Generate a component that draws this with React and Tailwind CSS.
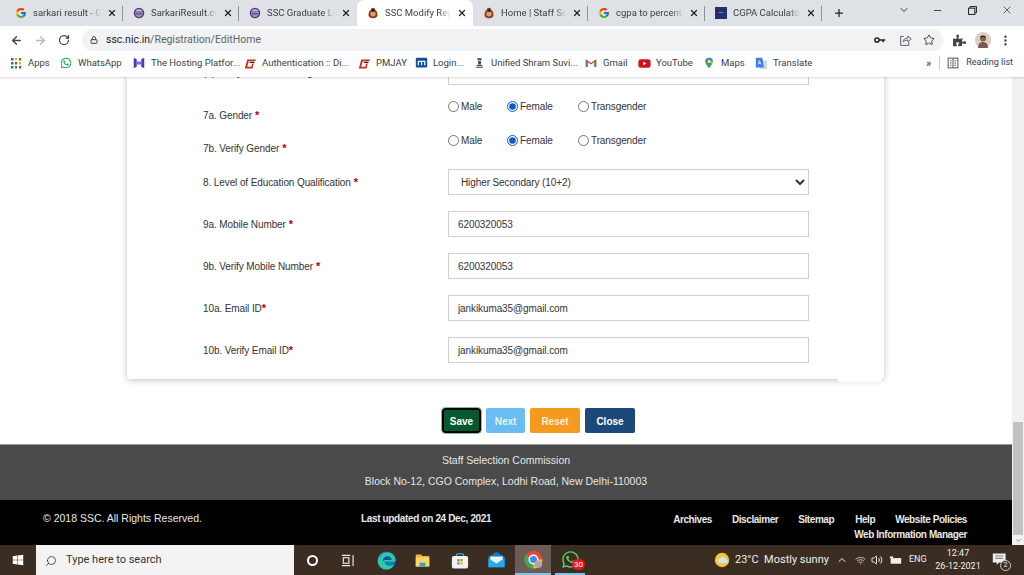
import React from "react";
import { ArrowLeft, ArrowRight, RotateCw, Lock, Star, MoreVertical, X, Plus, ChevronDown, ChevronUp, Minus, Search, Volume2, Wifi } from "lucide-react";
import { FcGoogle } from "react-icons/fc";
import { FaWhatsapp, FaPuzzlePiece, FaYoutube, FaWindows } from "react-icons/fa";

function EmblemIcon() {
  return (
    <svg viewBox="0 0 16 16" className="w-[12px] h-[12px]">
      <path d="M8 1c2 0 3 1.500 3 3 2 1 3 4 3 7 0 2-2 4-6 4s-6-2-6-4c0-3 1-6 3-7 0-1.500 1-3 3-3z" fill="#8a3a1c" />
      <circle cx="8" cy="9" r="3.500" fill="#d9a36a" />
      <circle cx="8" cy="4.500" r="2" fill="#3a2416" />
    </svg>
  );
}

function SarkariIcon() {
  return (
    <svg viewBox="0 0 16 16" className="w-[12px] h-[12px]">
      <circle cx="8" cy="8" r="7" fill="#4f3a7d" />
      <circle cx="8" cy="8" r="5" fill="#c9bfe0" />
      <path d="M3.500 6.500h9M3 8.500h10M4 10.500h8" stroke="#4f3a7d" strokeWidth="1.200" />
    </svg>
  );
}

function CalcIcon() {
  return (
    <svg viewBox="0 0 16 16" className="w-[12px] h-[12px]">
      <rect width="16" height="16" fill="#27306f" />
      <rect x="5" y="7" width="6" height="1" fill="#8f9ad0" />
    </svg>
  );
}

function AppsIcon() {
  const colors = ["#d93025", "#f9ab00", "#1e8e3e", "#1a73e8", "#d93025", "#f9ab00", "#1e8e3e", "#1a73e8", "#d93025"];
  return (
    <div className="grid grid-cols-3 gap-[1.500px] w-[10px] h-[10px]">
      {colors.map((c, i) => (
        <svg key={i} viewBox="0 0 2 2" className="w-[2.500px] h-[2.500px]">
          <rect width="2" height="2" fill={c} />
        </svg>
      ))}
    </div>
  );
}

function HostingIcon() {
  return (
    <svg viewBox="0 0 16 16" className="w-[12px] h-[12px]">
      <path d="M1 1l4 2v10l-4 2zM15 1l-4 2v10l4 2z" fill="#4b3bb5" />
      <path d="M5 6l6 0v4H5z" fill="#8d5fd8" />
    </svg>
  );
}

function SwooshIcon() {
  return (
    <svg viewBox="0 0 16 16" className="w-[13px] h-[13px]">
      <path d="M4 3h11l-1 2H6L4 12h5l1-4h2l-1.500 6H1z" fill="#c8321e" />
      <path d="M7 6.500h6" stroke="#1d1d1d" strokeWidth="1.600" />
    </svg>
  );
}

function MoodleIcon() {
  return (
    <svg viewBox="0 0 16 16" className="w-[13px] h-[13px]">
      <rect x="1" y="1" width="14" height="12" rx="1.500" fill="#0d4f9e" />
      <path d="M4 10V5.500h8V10M8 5.500V10" stroke="#fff" strokeWidth="1.500" fill="none" />
    </svg>
  );
}

function PillarIcon() {
  return (
    <svg viewBox="0 0 16 16" className="w-[11px] h-[12px]">
      <path d="M5 1h6v3H5zM6 5h4v5H6zM4 11h8v1.500H4zM3 13.500h10V15H3z" fill="#444" />
    </svg>
  );
}

function GmailIcon() {
  return (
    <svg viewBox="0 0 16 16" className="w-[12px] h-[12px]">
      <path d="M1 3v10h3V7l4 3 4-3v6h3V3l-7 5z" fill="#d93025" />
      <path d="M1 13h3V7L1 4.500z" fill="#4285f4" />
      <path d="M12 13h3V4.500L12 7z" fill="#34a853" />
    </svg>
  );
}

function MapsIcon() {
  return (
    <svg viewBox="0 0 16 16" className="w-[12px] h-[14px]">
      <path d="M8 1a5 5 0 0 0-5 5c0 3.500 5 9 5 9s5-5.500 5-9a5 5 0 0 0-5-5z" fill="#34a853" />
      <path d="M8 1a5 5 0 0 1 5 5L4 3z" fill="#4285f4" />
      <path d="M3 6a5 5 0 0 1 1-3l3 3z" fill="#ea4335" />
      <path d="M13 6c0 1-.500 2-1 3L8 6z" fill="#fbbc04" />
      <circle cx="8" cy="6" r="1.800" fill="#fff" />
    </svg>
  );
}

function TranslateIcon() {
  return (
    <svg viewBox="0 0 16 16" className="w-[13px] h-[13px]">
      <rect x="6" y="4" width="9" height="11" fill="#cfd8e6" />
      <path d="M1 1h8l2 12H1z" fill="#3f7fe0" />
      <path d="M4 9l1.500-4.500L7 9M4.500 7.800h2" stroke="#fff" fill="none" strokeWidth="0.900" />
    </svg>
  );
}

function ReadingIcon() {
  return (
    <svg viewBox="0 0 16 16" className="w-[12px] h-[12px]" fill="none" stroke="#444" strokeWidth="1.200">
      <rect x="1.500" y="1.500" width="13" height="13" />
      <path d="M8 1.500v13M4 5h2M4 8h2M4 11h2M10 5h2M10 8h2M10 11h2" />
    </svg>
  );
}

function KeyIcon() {
  return (
    <svg viewBox="0 0 16 10" className="w-[12px] h-[8px]" fill="none" stroke="#222" strokeWidth="2">
      <circle cx="4" cy="5" r="2.800" />
      <path d="M7 5h8M12 5v3" />
    </svg>
  );
}

function ShareIcon() {
  return (
    <svg viewBox="0 0 16 16" className="w-[13px] h-[13px]" fill="none" stroke="#5f6368" strokeWidth="1.200">
      <path d="M6 3H2v11h10v-4" />
      <path d="M5 10c0-3 2-5 6-5V2.500L15 6l-4 3.500V7.500C8 7.500 6 8.500 5 10z" />
    </svg>
  );
}

function RestoreIcon() {
  return (
    <svg viewBox="0 0 10 10" className="w-[9px] h-[9px]" fill="none" stroke="#222" strokeWidth="1.100">
      <rect x="0.600" y="2.400" width="7" height="7" />
      <path d="M2.400 2.400V.600h7v7H7.600" />
    </svg>
  );
}

function AvatarIcon() {
  return (
    <svg viewBox="0 0 16 16" className="w-[16px] h-[16px]">
      <circle cx="8" cy="8" r="8" fill="#d8cfc6" />
      <path d="M3 16c0-4 2-6 5-6s5 2 5 6z" fill="#7a5a52" />
      <circle cx="8" cy="6.500" r="3" fill="#8b5e3c" />
      <path d="M5 5.500C5 3 11 3 11 5.500 9 4.500 7 4.500 5 5.500z" fill="#1c1410" />
    </svg>
  );
}

function EdgeIcon() {
  return (
    <svg viewBox="0 0 20 20" className="w-[19px] h-[19px]">
      <circle cx="10" cy="10" r="9.500" fill="#0f7dc2" />
      <path d="M1 10C2 3 9 .500 14 2c4 1.500 6 5 5.500 9H8c0 4 5 6 10 3.500-2 4-6 5.500-9 5C4 19 .500 15 1 10z" fill="#30c9a8" />
      <path d="M6 12c-.500-4 2-6.500 5-6.500s4.500 2 4.500 4H8c-1 0-2 1-2 2.500z" fill="#0c5aa6" />
    </svg>
  );
}

function ExplorerIcon() {
  return (
    <svg viewBox="0 0 20 20" className="w-[17px] h-[15px]">
      <path d="M1 2h7l2 2h9v14H1z" fill="#e8b93c" />
      <rect x="1" y="6" width="18" height="12" fill="#f8d568" />
      <rect x="6" y="13" width="8" height="5" fill="#3a9fd5" />
    </svg>
  );
}

function StoreIcon() {
  return (
    <svg viewBox="0 0 20 20" className="w-[18px] h-[19px]">
      <path d="M6 6V3.500C6 2 14 2 14 3.500V6" stroke="#35a9e0" strokeWidth="1.500" fill="none" />
      <rect x="1" y="5" width="18" height="14" rx="2" fill="#f2f2f2" />
      <rect x="7" y="8.500" width="2.500" height="2.500" fill="#e8532b" />
      <rect x="10.500" y="8.500" width="2.500" height="2.500" fill="#7db33c" />
      <rect x="7" y="12" width="2.500" height="2.500" fill="#2f9be0" />
      <rect x="10.500" y="12" width="2.500" height="2.500" fill="#f5b82e" />
    </svg>
  );
}

function MailIcon() {
  return (
    <svg viewBox="0 0 20 20" className="w-[19px] h-[18px]">
      <path d="M1 6l9-5 9 5v12H1z" fill="#0f78c8" />
      <path d="M3 6h14v6l-7 4-7-4z" fill="#e9f5fc" />
      <path d="M1 8l9 6 9-6v10H1z" fill="#29a8ea" />
    </svg>
  );
}

function ChromeIcon() {
  return (
    <svg viewBox="0 0 20 20" className="w-[19px] h-[19px]">
      <circle cx="10" cy="10" r="9.500" fill="#e0483c" />
      <path d="M10 10L1.800 5A9.500 9.500 0 0 0 10 19.500z" fill="#3aa856" />
      <path d="M10 10h9.500A9.500 9.500 0 0 1 10 19.500z" fill="#f6c33b" />
      <circle cx="10" cy="10" r="4.500" fill="#4587ee" stroke="#fff" strokeWidth="1.500" />
      <circle cx="15" cy="15" r="4" fill="#b8a59b" />
    </svg>
  );
}

function WeatherIcon() {
  return (
    <svg viewBox="0 0 20 20" className="w-[16px] h-[16px]">
      <circle cx="10" cy="10" r="9" fill="#f7c52e" />
      <path d="M7 14a3 3 0 0 1 .500-6 4 4 0 0 1 7.500 1 2.500 2.500 0 0 1 0 5z" fill="#cfe3ee" />
    </svg>
  );
}

function BatteryIcon() {
  return (
    <svg viewBox="0 0 16 12" className="w-[13px] h-[11px]">
      <rect x="2" y="3" width="13" height="7" fill="#eee" />
      <path d="M1 1h4v2H1z" fill="#eee" />
    </svg>
  );
}

function NotifyIcon() {
  return (
    <svg viewBox="0 0 20 20" className="w-[16px] h-[16px]">
      <path d="M1 2h16v11h-8l-3 3v-3H1z" fill="#eee" />
      <path d="M4 5h10M4 8h10" stroke="#6a5a4c" strokeWidth="1" />
    </svg>
  );
}

const tabs = [
  { icon: <FcGoogle className="w-[12px] h-[12px]" />, title: "sarkari result - Go", width: "w-[118px]", sep: true },
  { icon: <SarkariIcon />, title: "SarkariResult.com", width: "w-[116px]", sep: true },
  { icon: <SarkariIcon />, title: "SSC Graduate Lev", width: "w-[118px]" },
  { icon: <EmblemIcon />, title: "SSC Modify Regis", width: "w-[116px]", active: true },
  { icon: <EmblemIcon />, title: "Home | Staff Sele", width: "w-[115px]", sep: true },
  { icon: <FcGoogle className="w-[12px] h-[12px]" />, title: "cgpa to percenta", width: "w-[117px]", sep: true },
  { icon: <CalcIcon />, title: "CGPA Calculator -", width: "w-[117px]", sep: true },
];

const bookmarks = [
  { icon: <AppsIcon />, label: "Apps", width: "w-[50px]" },
  { icon: <FaWhatsapp className="w-[12px] h-[12px] text-[#12a84e]" />, label: "WhatsApp", width: "w-[73px]" },
  { icon: <HostingIcon />, label: "The Hosting Platfor...", width: "w-[111px]" },
  { icon: <SwooshIcon />, label: "Authentication :: Di...", width: "w-[114px]" },
  { icon: <SwooshIcon />, label: "PMJAY", width: "w-[57px]" },
  { icon: <MoodleIcon />, label: "Login...", width: "w-[58px]" },
  { icon: <PillarIcon />, label: "Unified Shram Suvi...", width: "w-[112px]" },
  { icon: <GmailIcon />, label: "Gmail", width: "w-[53px]" },
  { icon: <FaYoutube className="w-[13px] h-[13px] text-[#d3101c]" />, label: "YouTube", width: "w-[65px]" },
  { icon: <MapsIcon />, label: "Maps", width: "w-[52px]" },
  { icon: <TranslateIcon />, label: "Translate", width: "w-[60px]" },
];

function Tab({ tab }) {
  return (
    <div className={`relative flex items-center h-full ${tab.width} pl-[9px] pr-[6px] gap-[6px] ${tab.active ? "bg-white rounded-t-[7px]" : ""}`}>
      <span className="flex w-[13px] justify-center shrink-0">{tab.icon}</span>
      <span className="flex-1 min-w-0 whitespace-nowrap text-[9.500px] text-[#3c4043] [mask-image:linear-gradient(90deg,#000_82%,transparent)]">{tab.title}</span>
      <X className="w-[10px] h-[10px] shrink-0 text-[#222]" strokeWidth={3} />
      {tab.sep && <span className="absolute right-0 top-[6px] h-[15px] w-px bg-[#8f9398]" />}
    </div>
  );
}

function Row({ label, children }) {
  return (
    <div className="flex items-center h-[26px] mb-[16px]">
      <label className="w-[245px] shrink-0 text-[10px] tracking-[-0.1px]">{label}</label>
      {children}
    </div>
  );
}

function Req({ tight }) {
  return <span className={`${tight ? "" : "ml-[3px]"} text-[#b00000] font-bold text-[11px]`}>*</span>;
}

function TextBox({ value }) {
  return <input readOnly value={value} className="w-[361px] h-[26px] px-[9px] bg-white border border-[#cfcfcf] text-[10px] tracking-[-0.1px] text-[#333] outline-none" />;
}

function GenderRow({ label, name, height, labelPad }) {
  return (
    <div className={`flex ${height}`}>
      <label className={`w-[245px] shrink-0 ${labelPad} text-[10px] tracking-[-0.1px]`}>{label}<Req /></label>
      <div className="flex items-start pt-[2px] text-[10px] tracking-[-0.1px]">
        <label className="flex items-center gap-[2px] w-[59px] h-[14px]">
          <input type="radio" name={name} className="w-[11px] h-[11px] m-0" />
          Male
        </label>
        <label className="flex items-center gap-[2px] w-[71px] h-[14px]">
          <input type="radio" name={name} defaultChecked className="w-[11px] h-[11px] m-0 accent-[#0b5cc4]" />
          Female
        </label>
        <label className="flex items-center gap-[2px] h-[14px]">
          <input type="radio" name={name} className="w-[11px] h-[11px] m-0" />
          Transgender
        </label>
      </div>
    </div>
  );
}

export default function App() {
  return (
    <div className="w-[1024px] h-[575px] flex flex-col overflow-hidden bg-white font-['Liberation_Sans',sans-serif]">
      {/* browser chrome */}
      <div className="h-[77px] shrink-0 font-['Roboto',sans-serif] z-10 shadow-[0_1px_2px_rgba(0,0,0,0.15)] bg-white">
        <div className="h-[26px] bg-[#dee1e6] flex items-end pl-[5px]">
          {tabs.map((t) => <Tab key={t.title} tab={t} />)}
          <div className="w-[34px] h-full flex items-center justify-center">
            <Plus className="w-[12px] h-[12px] text-[#222]" strokeWidth={2.500} />
          </div>
          <div className="flex items-center h-full ml-auto text-[#333]">
            <ChevronDown className="w-[12px] h-[12px] mr-[22px] mb-[6px]" />
            <Minus className="w-[11px] h-[11px] mr-[25px] mb-[6px]" />
            <span className="mr-[24px] mb-[6px]"><RestoreIcon /></span>
            <X className="w-[12px] h-[12px] mr-[11px] mb-[6px]" strokeWidth={1.500} />
          </div>
        </div>
        <div className="h-[26px] pt-[2px] flex items-center pl-[10px] pr-[12px] bg-white">
          <ArrowLeft className="w-[13px] h-[13px] text-[#444]" strokeWidth={2.500} />
          <ArrowRight className="w-[13px] h-[13px] ml-[11px] text-[#b6b8bb]" strokeWidth={2.500} />
          <RotateCw className="w-[12px] h-[12px] ml-[11px] text-[#444]" strokeWidth={2.500} />
          <div className="ml-[12px] flex items-center w-[861px] h-[22px] rounded-full bg-[#f0f2f4] pl-[8px] pr-[8px]">
            <Lock className="w-[8px] h-[8px] text-[#444] mr-[8px]" strokeWidth={3} />
            <span className="text-[10.500px] text-[#202124]">ssc.nic.in<span className="text-[#5f6368]">/Registration/EditHome</span></span>
            <span className="ml-auto"><KeyIcon /></span>
            <span className="ml-[13px]"><ShareIcon /></span>
            <Star className="ml-[11px] w-[12px] h-[12px] text-[#444]" strokeWidth={2} />
          </div>
          <FaPuzzlePiece className="ml-[10px] w-[13px] h-[13px] text-[#444]" />
          <span className="ml-[9px]"><AvatarIcon /></span>
          <MoreVertical className="ml-[8px] w-[13px] h-[13px] text-[#444]" strokeWidth={2.500} />
        </div>
        <div className="h-[25px] pb-[3px] flex items-center pl-[9px] pr-[11px] text-[9.500px] text-[#3c4043]">
          {bookmarks.map((b) => (
            <div key={b.label} className={`flex items-center gap-[5px] ${b.width} whitespace-nowrap`}>
              <span className="flex w-[14px] justify-center shrink-0">{b.icon}</span>
              {b.label}
            </div>
          ))}
          <span className="ml-auto text-[10px] font-bold text-[#444]">»</span>
          <span className="ml-[8px] w-px h-[14px] bg-[#c9cbce]" />
          <span className="ml-[7px] mr-[7px]"><ReadingIcon /></span>
          <span className="text-[9px]">Reading list</span>
        </div>
      </div>

      <div className="flex-1 flex min-h-0">
        {/* page */}
        <div className="flex-1 min-w-0 flex flex-col overflow-hidden text-[#333]">
          <div className="relative ml-[127px] w-[757px] -mt-[18px] pl-[76px] pb-[0.010px] bg-white rounded-b-[3px] shadow-[0_1px_6px_rgba(0,0,0,0.25)]">
            <Row label="(b) Verify Year of Passing"><TextBox value="" /></Row>
            <div className="-mt-[4px]" />
            <GenderRow label="7a. Gender" name="g1" height="h-[34px]" labelPad="pt-[10px]" />
            <GenderRow label="7b. Verify Gender" name="g2" height="h-[38px]" labelPad="pt-[9px]" />
            <Row label={<>8. Level of Education Qualification<Req /></>}>
              <select defaultValue="hs" className="w-[361px] h-[26px] pl-[8px] bg-white border border-[#cfcfcf] text-[10px] tracking-[-0.1px] text-[#333] outline-none">
                <option value="hs">Higher Secondary (10+2)</option>
              </select>
            </Row>
            <Row label={<>9a. Mobile Number<Req /></>}><TextBox value="6200320053" /></Row>
            <Row label={<>9b. Verify Mobile Number<Req /></>}><TextBox value="6200320053" /></Row>
            <Row label={<>10a. Email ID<Req tight /></>}><TextBox value="jankikuma35@gmail.com" /></Row>
            <Row label={<>10b. Verify Email ID<Req tight /></>}><TextBox value="jankikuma35@gmail.com" /></Row>
            <span className="absolute right-[3px] -bottom-[3px] w-[43px] h-[3px] bg-white" />
          </div>

          <div className="flex gap-[5px] pl-[442px] mt-[29px] text-[10px] font-bold">
            <button className="w-[39px] h-[25px] pt-[1px] rounded-[3px] bg-[#06582f] text-white border-2 border-black outline outline-1 outline-[#8fb5a3]">Save</button>
            <button className="w-[39px] h-[25px] pt-[1px] rounded-[2px] bg-[#69bdf0] text-[#e6f4fc]">Next</button>
            <button className="w-[50px] h-[25px] pt-[1px] rounded-[2px] bg-[#f59a1e] text-[#fdeedb]">Reset</button>
            <button className="w-[50px] h-[25px] pt-[1px] rounded-[2px] bg-[#1c4a78] text-white">Close</button>
          </div>

          <div className="mt-auto">
            <div className="h-[56px] bg-[#4a4a4a] border-t border-[#999] flex flex-col items-center pt-[8px] gap-[5px] text-[10.500px] text-[#e6e6e6]">
              <p>Staff Selection Commission</p>
              <p>Block No-12, CGO Complex, Lodhi Road, New Delhi-110003</p>
            </div>
            <div className="h-[45px] bg-black text-[#e8e8e8] flex pl-[43px] pr-[45px] pt-[11px] text-[10px] tracking-[-0.35px] font-bold">
              <p className="w-[318px] font-normal tracking-normal text-[10.500px]">© 2018 SSC. All Rights Reserved.</p>
              <p>Last updated on 24 Dec, 2021</p>
              <div className="ml-auto flex flex-col items-end pt-[1px] tracking-[-0.43px]">
                <div className="flex">
                  <span className="mr-[20px]">Archives</span>
                  <span className="mr-[20px]">Disclaimer</span>
                  <span className="mr-[21px]">Sitemap</span>
                  <span className="mr-[20px]">Help</span>
                  <span>Website Policies</span>
                </div>
                <span>Web Information Manager</span>
              </div>
            </div>
          </div>
        </div>

        {/* scrollbar */}
        <div className="w-[12px] shrink-0 bg-[#f1f1f1] flex flex-col items-center">
          <div className="mt-auto w-[10px] h-[113px] bg-[#c1c1c1]" />
          <div className="h-[10px] flex items-center">
            <ChevronDown className="w-[7px] h-[7px] text-[#888]" strokeWidth={3} />
          </div>
        </div>
      </div>

      {/* windows taskbar */}
      <div className="h-[30px] shrink-0 bg-[#3b2d21] flex items-center whitespace-nowrap font-['Roboto',sans-serif] text-[#f0f0f0]">
        <div className="w-[36px] shrink-0 flex justify-center"><FaWindows className="w-[12px] h-[12px] text-white" /></div>
        <div className="w-[258px] shrink-0 h-full flex items-center pl-[9px] pt-[1px] bg-[#f3f3f3] text-[#333] text-[11px]">
          <Search className="w-[12px] h-[12px] mr-[9px] -scale-x-100 text-[#222]" strokeWidth={1.500} />
          Type here to search
        </div>
        <div className="w-[36px] shrink-0 flex justify-center"><span className="w-[11px] h-[11px] rounded-full border-2 border-white" /></div>
        <div className="w-[35px] shrink-0 flex justify-center">
          <svg viewBox="0 0 14 14" className="w-[13px] h-[13px]" fill="none" stroke="#eee" strokeWidth="1.200">
            <path d="M1 1.500h9M1 12.500h9M13 1v12" />
            <rect x="2.500" y="4" width="6" height="6" />
          </svg>
        </div>
        <div className="w-[39px] shrink-0 flex justify-center pl-[4px]"><EdgeIcon /></div>
        <div className="w-[37px] shrink-0 flex justify-center"><ExplorerIcon /></div>
        <div className="w-[37px] shrink-0 flex justify-center"><StoreIcon /></div>
        <div className="w-[37px] shrink-0 flex justify-center"><MailIcon /></div>
        <div className="w-[36px] shrink-0 h-full flex items-center justify-center bg-[#6b5d54] border-b-2 border-[#7cc4ee]"><ChromeIcon /></div>
        <div className="relative w-[30px] shrink-0 h-full flex items-center justify-center ml-[4px] border-b-2 border-[#7cc4ee]">
          <FaWhatsapp className="w-[19px] h-[19px] text-[#4cd964]" />
          <span className="absolute right-0 bottom-[3px] w-[13px] h-[11px] rounded-full bg-[#e0161e] text-[8px] leading-[11px] text-center text-white">30</span>
        </div>
        <div className="ml-[129px] flex items-center shrink-0">
          <WeatherIcon />
          <span className="ml-[5px] w-[101px] text-[11px]">23°C&nbsp; Mostly sunny</span>
        </div>
        <ChevronUp className="w-[12px] h-[12px] shrink-0" strokeWidth={2} />
        <Wifi className="ml-[7px] w-[11px] h-[11px] shrink-0 text-[#ccc]" />
        <Volume2 className="ml-[5px] w-[12px] h-[12px] shrink-0" />
        <span className="ml-[6px]"><BatteryIcon /></span>
        <span className="ml-[7px] w-[18px] text-[9px]">ENG</span>
        <div className="ml-[9px] w-[44px] shrink-0 flex flex-col items-center text-[9px] leading-[13px]">
          <span>12:47</span>
          <span>26-12-2021</span>
        </div>
        <div className="relative ml-[12px] shrink-0">
          <NotifyIcon />
          <span className="absolute -right-[3px] -bottom-[3px] w-[11px] h-[11px] rounded-full border border-[#ccc] bg-[#3b2d21] text-[7px] leading-[9px] text-center">2</span>
        </div>
      </div>
    </div>
  );
}
